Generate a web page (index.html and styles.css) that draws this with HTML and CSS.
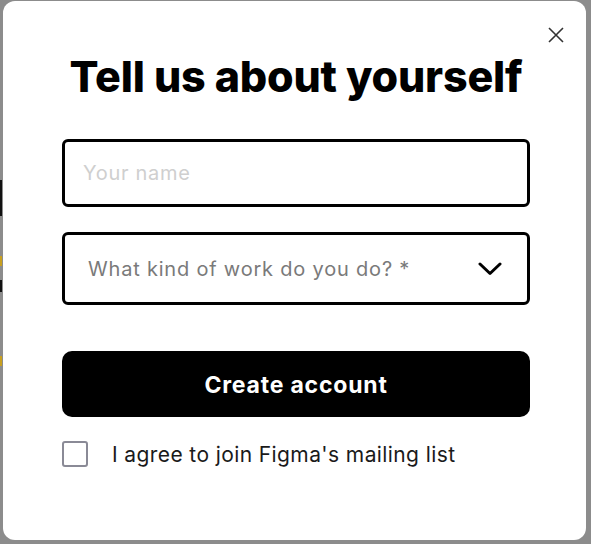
FILE: index.html
```html
<!DOCTYPE html>
<html lang="en">
<head>
<meta charset="utf-8">
<title>Tell us about yourself</title>
<link rel="stylesheet" href="styles.css">
</head>
<body>
<div class="backdrop">
  <span class="bg-mark bg-mark-1"></span>
  <span class="bg-mark bg-mark-2"></span>
  <span class="bg-mark bg-mark-3"></span>
  <span class="bg-mark bg-mark-4"></span>
  <div class="modal">
    <button class="close" aria-label="Close">
      <svg width="18" height="18" viewBox="0 0 18 18"><path d="M2 2 L16 16 M16 2 L2 16" stroke="#333" stroke-width="1.6" fill="none"/></svg>
    </button>
    <h1 class="title">Tell us about yourself</h1>
    <div class="form">
      <div class="field"><span class="placeholder">Your name</span></div>
      <div class="select">
        <span class="select-text">What kind of work do you do? *</span>
        <svg class="chevron" width="24" height="14" viewBox="0 0 24 14"><path d="M2 2 L12 11.5 L22 2" stroke="#000" stroke-width="3" fill="none" stroke-linecap="round" stroke-linejoin="round"/></svg>
      </div>
      <button class="submit">Create account</button>
      <label class="check">
        <span class="box"></span>
        <span class="check-label">I agree to join Figma's mailing list</span>
      </label>
    </div>
  </div>
</div>
</body>
</html>
```

FILE: styles.css
```css
html, body {
  margin: 0;
  padding: 0;
  background: #8c8c8c;
}
body {
  width: 591px;
  height: 544px;
  overflow: hidden;
}
.backdrop {
  position: relative;
  width: 591px;
  height: 544px;
  padding: 1px 5px 4px 3px;
  box-sizing: border-box;
}
.bg-mark {
  position: absolute;
  left: 0;
  width: 2px;
}
.bg-mark-1 { top: 180px; height: 36px; background: #111; }
.bg-mark-2 { top: 256px; height: 10px; background: #c8a020; }
.bg-mark-3 { top: 280px; height: 12px; background: #111; }
.bg-mark-4 { top: 356px; height: 10px; background: #c8a020; }
.modal {
  position: relative;
  background: #fff;
  border-radius: 12px;
  height: 539px;
  padding: 49px 56px 0 59px;
  box-sizing: border-box;
  font-family: "Inter", "Liberation Sans", sans-serif;
}
.close {
  position: absolute;
  top: 24px;
  right: 20px;
  width: 20px;
  height: 20px;
  padding: 0;
  border: 0;
  background: none;
  display: flex;
  align-items: center;
  justify-content: center;
}
.title {
  margin: 0;
  font-size: 43px;
  line-height: 52px;
  font-weight: 800;
  text-align: center;
  color: #000;
  letter-spacing: -0.2px;
}
.form {
  margin-top: 37px;
  display: flex;
  flex-direction: column;
}
.field {
  height: 68px;
  border: 3px solid #000;
  border-radius: 6px;
  box-sizing: border-box;
  display: flex;
  align-items: center;
  padding-left: 18px;
}
.placeholder {
  font-size: 20px;
  letter-spacing: 0.7px;
  color: #cfcfcf;
}
.select {
  margin-top: 25px;
  height: 73px;
  border: 3px solid #000;
  border-radius: 6px;
  box-sizing: border-box;
  display: flex;
  align-items: center;
  justify-content: space-between;
  padding: 0 25px 0 23px;
}
.select-text {
  font-size: 20px;
  letter-spacing: 0.8px;
  color: #7a7a7a;
}
.submit {
  margin-top: 46px;
  height: 66px;
  padding-top: 3px;
  border: 0;
  border-radius: 10px;
  background: #000;
  color: #fff;
  font-family: "Inter", "Liberation Sans", sans-serif;
  font-size: 23px;
  font-weight: 700;
  letter-spacing: 0.8px;
}
.check {
  margin-top: 24px;
  display: flex;
  align-items: center;
  gap: 24px;
}
.box {
  width: 26px;
  height: 26px;
  border: 2px solid #8a8a96;
  border-radius: 3px;
  box-sizing: border-box;
}
.check-label {
  font-size: 21px;
  letter-spacing: 0.4px;
  color: #1a1a1a;
}
```
